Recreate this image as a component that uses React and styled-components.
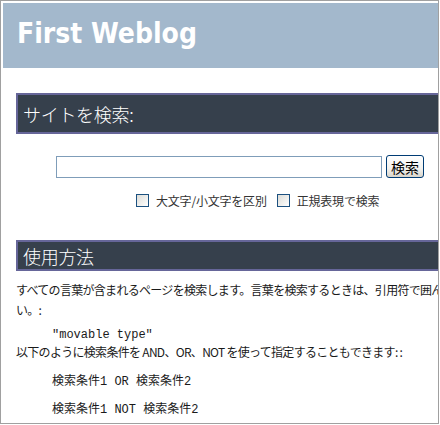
import React from "react";
import styled, { createGlobalStyle } from "styled-components";

const Global = createGlobalStyle`
  html, body { margin: 0; padding: 0; background: #fff; }
  body { overflow: hidden; }
`;

const Frame = styled.div`
  box-sizing: border-box;
  width: 439px;
  height: 424px;
  border: 1px solid #a0a0a0;
  padding: 2px 0 0 2px;
  overflow: hidden;
  background: #fff;
`;

const Page = styled.div`
  width: 520px;
`;

const Header = styled.div`
  box-sizing: border-box;
  height: 65px;
  background: #a3b8cc;
  padding: 14px 0 0 14px;
  font-family: "DejaVu Sans Condensed", "DejaVu Sans", sans-serif;
  font-weight: bold;
  font-size: 28px;
  line-height: 33px;
  color: #fff;
`;

const Content = styled.div`
  padding-left: 13px;
  width: 480px;
  font-family: "Noto Sans CJK JP", sans-serif;
`;

const SectionBar = styled.div`
  box-sizing: border-box;
  height: ${(p) => p.$h}px;
  margin-top: ${(p) => p.$mt}px;
  width: 520px;
  border: 2px solid #666699;
  background: #36404c;
  display: flex;
  align-items: center;
  padding-left: 5px;
  color: #fff;
  font-size: 18px;
  font-weight: 300;
  letter-spacing: -0.3px;
`;

const SearchRow = styled.form`
  display: flex;
  align-items: center;
  gap: 4px;
  margin: 21px 0 0 40px;
`;

const SearchInput = styled.input`
  box-sizing: border-box;
  width: 326px;
  height: 22px;
  border: 1px solid #7f9db9;
  padding: 0 3px;
  margin: 0;
  outline: none;
`;

const Button = styled.button`
  box-sizing: border-box;
  width: 38px;
  height: 23px;
  margin: 0;
  padding: 0;
  border: 1px solid #003c74;
  border-radius: 3px;
  background: linear-gradient(#ffffff, #f3f2ee 60%, #d9d5cb);
  font-family: "Noto Sans CJK JP", sans-serif;
  font-size: 14px;
  line-height: 20px;
  color: #000;
`;

const OptionRow = styled.div`
  display: flex;
  align-items: center;
  margin: 16px 0 0 120px;
  gap: 10px;
`;

const Option = styled.label`
  display: flex;
  align-items: center;
  gap: 7px;
  font-size: 12px;
  letter-spacing: -0.2px;
  color: #333;
  line-height: 13px;
`;

const Check = styled.span`
  box-sizing: border-box;
  width: 13px;
  height: 13px;
  border: 1px solid #1c5180;
  background: linear-gradient(135deg, #dcdcd7, #ffffff);
`;

const Para = styled.p`
  margin: ${(p) => p.$mt}px 0 0 0;
  font-size: 12px;
  line-height: 20px;
  letter-spacing: -0.7px;
  color: #1a1a1a;
`;

const Code = styled.div`
  margin: ${(p) => p.$mt}px 0 0 36px;
  font-family: "Liberation Mono", "Noto Sans CJK JP", monospace;
  font-size: 12px;
  line-height: ${(p) => p.$lh || 20}px;
  color: #1a1a1a;
  white-space: pre;
`;

export default function App() {
  return (
    <>
      <Global />
      <Frame>
        <Page>
          <Header>First Weblog</Header>
          <Content>
            <SectionBar $h={41} $mt={25}>サイトを検索:</SectionBar>
            <SearchRow onSubmit={(e) => e.preventDefault()}>
              <SearchInput type="text" />
              <Button type="submit">検索</Button>
            </SearchRow>
            <OptionRow>
              <Option>
                <Check />
                大文字/小文字を区別
              </Option>
              <Option>
                <Check />
                正規表現で検索
              </Option>
            </OptionRow>
            <SectionBar $h={31} $mt={33}>使用方法</SectionBar>
            <Para $mt={9}>
              すべての言葉が含まれるページを検索します。言葉を検索するときは、引用符で囲んでください。:
            </Para>
            <Code $mt={6} $lh={18}>"movable type"</Code>
            <Para $mt={-2}>
              以下のように検索条件を AND、OR、NOT を使って指定することもできます: :
            </Para>
            <Code $mt={10}>検索条件1 OR 検索条件2</Code>
            <Code $mt={8}>検索条件1 NOT 検索条件2</Code>
          </Content>
        </Page>
      </Frame>
    </>
  );
}
